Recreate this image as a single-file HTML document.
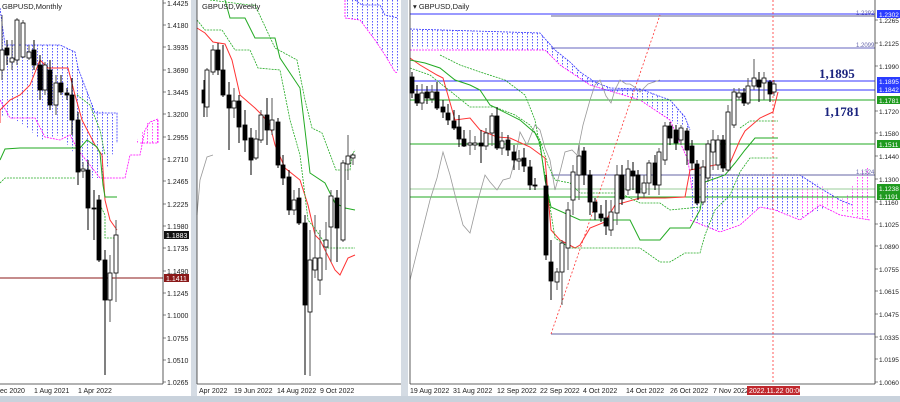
<!DOCTYPE html><html><head><meta charset="utf-8"><style>
html,body{margin:0;padding:0;background:#fff;width:900px;height:402px;overflow:hidden}
svg text{font-family:"Liberation Sans",sans-serif;font-size:8px;fill:#222}
</style></head><body>
<svg id="s" width="900" height="402" viewBox="0 0 900 402" xmlns="http://www.w3.org/2000/svg">
<defs>
<pattern id="hb" x="0" y="0" width="5" height="3" patternUnits="userSpaceOnUse"><rect x="2" y="0" width="1" height="1.5" fill="#5a5aff"/></pattern>
<pattern id="hm" x="0" y="0" width="5" height="3" patternUnits="userSpaceOnUse"><rect x="2" y="0" width="1" height="1.5" fill="#ff40ff"/></pattern>
</defs>
<rect width="900" height="402" fill="#fff"/>
<rect x="191" y="0" width="6" height="402" fill="#d4dbe3"/>
<rect x="401" y="0" width="7" height="402" fill="#d4dbe3"/>
<rect x="0" y="396" width="900" height="6" fill="#c9d2dc"/>
<g id="m">
<polygon points="0,8 5,45 30,45 60,45 75,52 78,68 95,110 117,115 117,143 103,178 88,178 78,158 60,135 40,140 30,130 20,122 10,118 0,115" fill="url(#hb)"/>
<polygon points="122,143 140,143 158,143 158,120 148,122 142,133 135,143" fill="url(#hm)"/>
<polyline points="0,8 5,45 60,45 75,52 78,68 95,113 117,113 117,143" fill="none" stroke="#33f" stroke-dasharray="2,1" stroke-width=".8"/>
<polyline points="0,100 10,118 35,118 45,137 60,140 70,135 78,150 100,178 125,178 130,155 140,155 145,130 150,122 158,119 158,143 140,143" fill="none" stroke="#f0f" stroke-dasharray="2,1" stroke-width=".8"/>
<polyline points="0,123 0,110 10,100 20,95 30,85 40,60 48,68 55,68 68,68 75,95 82,120 95,145 102,155 105,200 110,220 117,230" fill="none" stroke="#f33" stroke-width="1"/>
<polyline points="0,160 5,149 20,148 80,148 87,140 97,147 100,153 103,185 105,197 117,197" fill="none" stroke="#2a2" stroke-width="1"/>
<polyline points="0,183 5,178 30,178 75,178" fill="none" stroke="#2a2" stroke-width=".8" stroke-dasharray="2,1"/>
<polyline points="77,95 90,105 100,130 105,155" fill="none" stroke="#2a2" stroke-width=".8" stroke-dasharray="2,1"/>
<polyline points="100,205 105,215 105,238 117,238" fill="none" stroke="#2a2" stroke-width=".8" stroke-dasharray="2,1"/>
<line x1="0" y1="278" x2="163" y2="278" stroke="#8b1a1a" stroke-width="1"/>
<line x1="163" y1="0" x2="163" y2="384" stroke="#333" stroke-width=".8"/>
</g>
<g id="w">
<polygon points="335,0 345,0 345,18 360,20 375,40 385,55 395,70 398,72 398,0" fill="url(#hb)"/>
<polyline points="345,0 345,18 360,20 375,40 385,55 395,72 398,73" fill="none" stroke="#f0f" stroke-width=".8" stroke-dasharray="2,1"/>
<polyline points="355,0 362,5 380,5 385,15 398,18" fill="none" stroke="#33f" stroke-width=".8" stroke-dasharray="2,1"/>
<polyline points="197,28 205,33 213,42 225,44 232,60 240,95 255,108 262,115 270,125 275,145 285,168 300,180 308,205 315,235 320,240 335,270 340,275 348,258 355,255" fill="none" stroke="#f33" stroke-width="1"/>
<polyline points="225,0 230,18 245,18 255,38 275,38 280,58 300,88 305,130 310,173 325,183 335,203 345,208 355,210" fill="none" stroke="#2a2" stroke-width="1"/>
<polyline points="210,0 250,5 255,5 275,48 297,60 305,100 312,128 322,133 336,170 350,170 352,155 355,150" fill="none" stroke="#2a2" stroke-width=".8" stroke-dasharray="2,1"/>
<polyline points="197,20 205,30 222,30 235,50 250,50 258,68 280,70 290,120 300,155 308,220 316,230 328,248 355,248" fill="none" stroke="#2a2" stroke-width=".8" stroke-dasharray="2,1"/>
<polyline points="197,215 200,180 207,157 213,155" fill="none" stroke="#999" stroke-width=".8"/>
</g>
<g id="d">
<polygon points="410,29 540,33 555,50 570,62 580,72 595,82 610,88 640,89 670,100 685,117 690,130 670,120 640,100 590,85 560,65 545,50 500,50 410,48" fill="url(#hb)"/>
<polyline points="410,29 540,33 555,50 570,62 580,72 595,82 610,88 640,89 670,100 685,117 690,130" fill="none" stroke="#33f" stroke-width=".8" stroke-dasharray="2,1"/>
<polyline points="410,50 500,50 545,50 560,65 590,85 640,100 670,120 688,160 692,190" fill="none" stroke="#f0f" stroke-width=".8" stroke-dasharray="2,1"/>
<polygon points="690,175 800,175 820,185 835,195 845,200 800,218 775,210 760,207 740,220 720,232 700,225 690,215" fill="url(#hb)"/>
<polygon points="820,185 835,195 845,200 860,172 870,165 870,220 860,218 840,210 820,205 800,218 800,190" fill="url(#hm)"/>
<polyline points="690,220 720,232 740,225 760,207 775,210 800,220 820,205 840,215 870,220" fill="none" stroke="#f0f" stroke-width=".8" stroke-dasharray="2,1"/>
<polyline points="700,175 800,175 820,188 840,200 852,205" fill="none" stroke="#33f" stroke-width=".8" stroke-dasharray="2,1"/>
<line x1="410" y1="14" x2="875" y2="14" stroke="#33f" stroke-width="1"/>
<line x1="551" y1="16" x2="875" y2="16" stroke="#336" stroke-width=".8"/>
<line x1="551" y1="48" x2="875" y2="48" stroke="#33a" stroke-width=".8"/>
<line x1="410" y1="81" x2="875" y2="81" stroke="#33f" stroke-width="1"/>
<line x1="410" y1="90" x2="875" y2="90" stroke="#33f" stroke-width="1"/>
<line x1="410" y1="100" x2="875" y2="100" stroke="#2a2" stroke-width="1"/>
<line x1="410" y1="144" x2="875" y2="144" stroke="#2a2" stroke-width="1"/>
<line x1="551" y1="175" x2="875" y2="175" stroke="#338" stroke-width=".8"/>
<line x1="410" y1="189" x2="875" y2="189" stroke="#9c9" stroke-width="1"/>
<line x1="410" y1="197" x2="875" y2="197" stroke="#2a2" stroke-width="1"/>
<line x1="551" y1="334" x2="875" y2="334" stroke="#338" stroke-width=".8"/>
<line x1="551" y1="334" x2="660" y2="15" stroke="#f33" stroke-width=".8" stroke-dasharray="2,2"/>
<line x1="773" y1="0" x2="773" y2="384" stroke="#f33" stroke-width=".8" stroke-dasharray="2,2"/>
<polyline points="410,280 420,240 430,200 437,178 443,152 450,175 455,195 463,225 470,233 478,200 485,175 490,182 497,190 503,180 510,178 515,160 520,132 527,145 535,125 540,130 545,148 550,160 555,190 560,172 565,152 572,150 577,155 583,125 590,100 595,85 600,80 606,96 611,103 615,90 620,80 626,84 630,84 636,88 640,92 646,86 648,84 660,80" fill="none" stroke="#999" stroke-width=".8"/>
<polyline points="410,58 420,65 437,75 443,78 455,120 470,118 480,130 497,137 510,138 530,147 545,158 551,230 560,240 575,248 580,245 590,228 605,222 615,205 640,198 665,198 685,197 690,170 700,168 715,165 730,163 740,140 745,131 760,118 773,112 778,92" fill="none" stroke="#f33" stroke-width="1"/>
<polyline points="410,60 425,63 440,68 455,80 470,85 480,90 490,105 520,120 535,133 540,143 545,180 551,207 580,220 630,220 640,240 660,240 670,228 690,228 700,210 705,182 725,175 735,163 745,150 755,138 778,138" fill="none" stroke="#2a2" stroke-width="1"/>
<polyline points="410,68 430,75 470,107 495,107 515,115 530,125 540,140 548,165 555,180 570,183 580,193 620,193 640,203 660,203 670,210 700,207" fill="none" stroke="#2a2" stroke-width=".8" stroke-dasharray="2,1"/>
<polyline points="440,55 460,65 480,72 505,80 525,95 535,120 545,175 555,238 570,248 640,248 660,262 670,262 685,253 700,253 705,235 715,210 730,195 740,172 750,158 778,158" fill="none" stroke="#2a2" stroke-width=".8" stroke-dasharray="2,1"/>
<polyline points="740,128 750,121 778,121" fill="none" stroke="#2a2" stroke-width=".8" stroke-dasharray="2,1"/>
<line x1="875" y1="0" x2="875" y2="384" stroke="#333" stroke-width=".8"/>
<line x1="410" y1="0" x2="410" y2="384" stroke="#333" stroke-width=".8"/>
<line x1="410" y1="384" x2="875" y2="384" stroke="#333" stroke-width=".8"/>
</g>
<line x1="0" y1="384" x2="163" y2="384" stroke="#333" stroke-width=".8"/>
<line x1="197" y1="384" x2="401" y2="384" stroke="#333" stroke-width=".8"/>
<line x1="197" y1="0" x2="197" y2="384" stroke="#333" stroke-width=".8"/>
<g id="c"></g>
<text x="2" y="9" style="font-size:7.5px">GBPUSD,Monthly</text>
<text x="202" y="9" style="font-size:7.5px">GBPUSD,Weekly</text>
<text x="413" y="9" style="font-size:7.5px">▾ GBPUSD,Daily</text>
<text x="819" y="78" style="font-family:'Liberation Serif',serif;font-size:13px;font-weight:bold;fill:#1a237e">1,1895</text>
<text x="824" y="116" style="font-family:'Liberation Serif',serif;font-size:13px;font-weight:bold;fill:#1a237e">1,1781</text>
<text x="856" y="15" style="font-size:6px;fill:#66a">1.2292</text>
<text x="856" y="47" style="font-size:6px;fill:#66a">1.2099</text>
<text x="856" y="174" style="font-size:6px;fill:#66a">1.1324</text>
<g id="ax"></g>
</svg>
<script>
var NS="http://www.w3.org/2000/svg",c=document.getElementById('c'),ax=document.getElementById('ax');
function el(p,t,a,txt){var e=document.createElementNS(NS,t);for(var k in a)e.setAttribute(k,a[k]);if(txt)e.textContent=txt;p.appendChild(e);return e;}
function candles(arr,w){arr.forEach(function(d){var x=d[0],b=d[1],t=d[2],bt=d[3],hi=d[4],lo=d[5];
el(c,'line',{x1:x,y1:hi,x2:x,y2:lo,stroke:b?'#000':'#555','stroke-width':1});
el(c,'rect',{x:x-w/2,y:t,width:w,height:Math.max(1,bt-t),fill:b?'#000':'#fff',stroke:'#000','stroke-width':.8});});}
candles([[412,1,77,93,72,98],[417,1,94,103,85,106],[422,0,93,103,84,110],[427,1,92,98,86,104],[432,0,92,99,85,103],[437,1,92,108,82,110],[443,1,107,112,100,118],[448,1,113,120,104,125],[454,1,121,128,110,130],[459,1,127,139,115,147],[464,1,139,146,130,147],[470,0,143,145,130,155],[475,0,143,145,136,150],[481,1,143,146,130,163],[486,0,133,146,128,150],[492,0,116,133,113,146],[497,1,116,148,107,150],[502,0,141,148,132,155],[508,1,140,150,135,156],[514,1,152,160,145,170],[519,0,159,161,150,170],[524,1,158,166,148,172],[530,1,167,185,160,190],[535,1,185,186,178,190],[546,1,186,255,175,260],[551,1,262,281,240,300],[557,0,272,282,268,290],[562,0,243,272,240,305],[568,0,210,248,202,270],[573,0,172,200,165,215],[579,0,156,175,145,200],[584,1,151,175,147,185],[590,1,175,202,170,215],[595,1,202,212,198,220],[601,1,214,218,205,222],[606,1,218,226,200,235],[611,0,212,230,200,236],[617,0,175,213,165,225],[622,1,175,199,165,205],[628,0,169,190,160,195],[633,1,171,176,162,190],[638,1,175,193,170,200],[644,0,183,193,175,198],[649,0,163,183,160,195],[655,1,163,185,155,190],[659,0,152,185,148,195],[665,0,126,160,122,165],[670,1,126,138,122,145],[676,1,130,143,125,150],[681,0,128,140,125,145],[687,1,131,150,128,165],[692,1,146,163,140,170],[697,1,164,203,160,205],[703,0,167,202,160,205],[708,0,144,178,140,182],[713,0,140,152,130,170],[718,0,140,165,135,170],[723,1,140,168,135,172],[728,0,112,170,105,172],[734,0,92,125,88,128],[739,0,93,97,88,100],[744,1,93,103,88,106],[748,0,86,103,78,105],[754,0,78,86,59,90],[759,1,80,87,72,102],[764,0,78,83,72,100],[770,1,82,94,80,102],[774,0,84,92,80,96]],4);
candles([[204,1,90,103,80,117],[207,0,70,107,68,117],[213,0,50,72,45,75],[218,1,50,70,43,75],[223,1,70,95,45,97],[229,1,95,108,82,150],[234,0,101,108,88,118],[239,1,101,127,95,143],[245,1,125,140,110,152],[251,1,138,160,128,175],[256,0,139,158,130,160],[261,0,115,140,110,143],[267,1,115,130,98,145],[272,0,120,130,98,135],[278,1,122,165,118,168],[283,1,165,178,155,185],[289,1,177,210,170,215],[294,0,200,210,190,215],[299,1,198,223,188,225],[305,1,223,305,215,375],[310,0,260,312,230,376],[315,0,258,270,215,278],[320,0,258,280,230,295],[326,0,240,247,222,270],[331,0,196,227,190,262],[337,1,198,228,190,262],[343,0,163,240,160,242],[348,0,156,164,135,180],[353,0,155,158,153,165]],4);
candles([[2,0,50,70,15,80],[7,1,48,55,40,65],[12,0,58,62,40,70],[17,0,20,60,18,65],[23,0,23,57,20,58],[29,0,52,58,45,60],[34,1,50,65,40,70],[40,1,65,90,55,100],[45,0,65,90,62,95],[50,1,70,105,60,110],[56,0,83,105,75,115],[61,1,83,92,75,95],[67,1,93,95,88,100],[72,1,95,120,78,135],[78,1,120,172,112,185],[83,0,169,171,162,178],[88,1,170,208,160,230],[94,1,208,208,190,240],[99,1,200,260,195,262],[105,1,260,300,250,375],[110,0,273,300,255,322],[116,0,235,273,220,302]],4);
var m=[["1.4425",3],["1.4180",25],["1.3935",47],["1.3690",70],["1.3445",92],["1.3200",114],["1.2955",137],["1.2710",159],["1.2465",181],["1.2225",204],["1.1980",226],["1.1735",248],["1.1490",271],["1.1245",293],["1.1000",315],["1.0755",338],["1.0510",360],["1.0265",382]];
m.forEach(function(v){el(ax,'line',{x1:163,y1:v[1],x2:166,y2:v[1],stroke:'#333','stroke-width':.6});el(ax,'text',{x:167,y:v[1]+3,style:'font-size:7px'},v[0]);});
el(ax,'rect',{x:164,y:231,width:25,height:8,fill:'#111'});el(ax,'text',{x:166,y:238,style:'font-size:7px;fill:#fff'},"1.1883");
el(ax,'rect',{x:164,y:274,width:25,height:8,fill:'#8b1a1a'});el(ax,'text',{x:166,y:281,style:'font-size:7px;fill:#fff'},"1.1411");
var dd=[["1.2265",20],["1.2125",43],["1.1990",66],["1.1720",111],["1.1580",133],["1.1440",156],["1.1300",179],["1.1160",202],["1.1025",224],["1.0890",246],["1.0755",269],["1.0615",291],["1.0475",314],["1.0335",337],["1.0195",359],["1.0060",382]];
dd.forEach(function(v){el(ax,'line',{x1:875,y1:v[1],x2:878,y2:v[1],stroke:'#333','stroke-width':.6});el(ax,'text',{x:879,y:v[1]+3,style:'font-size:6.5px'},v[0]);});
[["1.2302",14,'#2a3cff'],["1.1895",81,'#2a3cff'],["1.1842",89,'#2a3cff'],["1.1781",100,'#1f9a1f'],["1.1511",144,'#1f9a1f'],["1.1238",188,'#1f9a1f'],["1.1191",196,'#1f9a1f']].forEach(function(v){el(ax,'rect',{x:877,y:v[1]-4,width:23,height:8,fill:v[2]});el(ax,'text',{x:879,y:v[1]+3,style:'font-size:6.5px;fill:#fff'},v[0]);});
[["ec 2020",0],["1 Aug 2021",34],["1 Apr 2022",78],["Apr 2022",199],["19 Jun 2022",234],["14 Aug 2022",277],["9 Oct 2022",320],["19 Aug 2022",410],["31 Aug 2022",453],["12 Sep 2022",497],["22 Sep 2022",540],["4 Oct 2022",583],["14 Oct 2022",626],["26 Oct 2022",670],["7 Nov 2022",713]].forEach(function(v){el(ax,'text',{x:v[1],y:393,style:'font-size:7px'},v[0]);});
el(ax,'rect',{x:747,y:386,width:53,height:9,fill:'#c0282d'});el(ax,'text',{x:749,y:393,style:'font-size:7px;fill:#fff'},"2022.11.22 00:00");
</script>
</body></html>
